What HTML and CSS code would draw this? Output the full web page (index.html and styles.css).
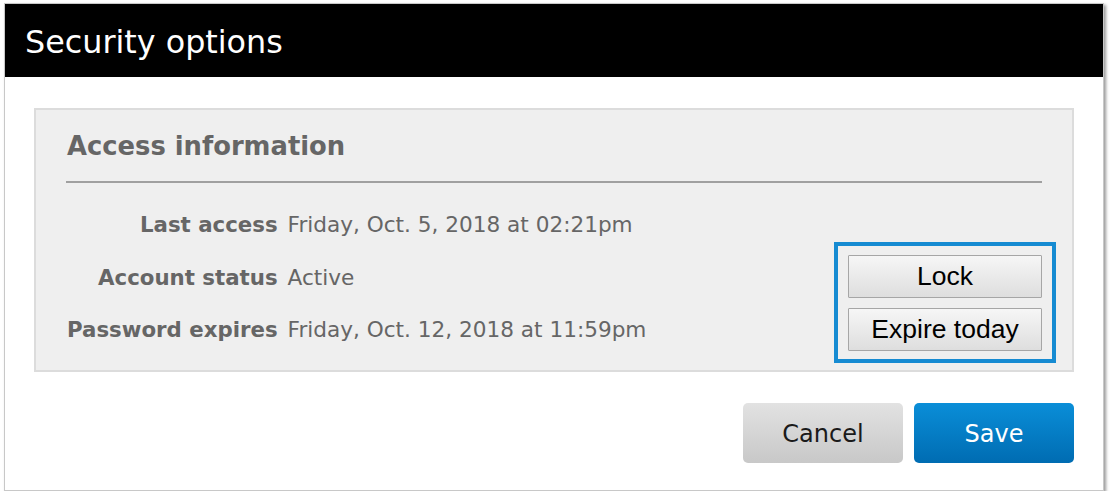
FILE: index.html
```html
<!DOCTYPE html>
<html>
<head>
<meta charset="utf-8">
<link rel="stylesheet" href="styles.css">
</head>
<body>
<div class="dialog">
  <div class="header">Security options</div>
  <div class="body">
    <div class="panel">
      <div class="panel-title">Access information</div>
      <div class="rule"></div>
      <div class="content">
        <div class="rows">
          <div class="label">Last access</div><div class="value">Friday, Oct. 5, 2018 at 02:21pm</div>
          <div class="label">Account status</div><div class="value">Active</div>
          <div class="label">Password expires</div><div class="value">Friday, Oct. 12, 2018 at 11:59pm</div>
        </div>
        <div class="actions">
          <button class="btn-small">Lock</button>
          <button class="btn-small">Expire today</button>
        </div>
      </div>
    </div>
    <div class="footer">
      <button class="btn btn-cancel">Cancel</button>
      <button class="btn btn-save">Save</button>
    </div>
  </div>
</div>
</body>
</html>
```
FILE: styles.css
```css
html, body {
  margin: 0;
  padding: 0;
  background: #fff;
}
body {
  font-family: "DejaVu Sans", sans-serif;
}
.dialog {
  margin: 3px 0 0 4px;
  width: 1098px;
  height: 486px;
  border: 1px solid #c8c8c8;
  box-shadow: 2px 2px 3px rgba(0, 0, 0, 0.4);
  background: #fff;
  display: flex;
  flex-direction: column;
}
.header {
  background: #000;
  color: #fff;
  height: 73px;
  padding-left: 20px;
  font-size: 31.8px;
  line-height: 76px;
}
.body {
  padding: 31px 29px 0 29px;
}
.panel {
  border: 2px solid #dcdcdc;
  background: #efefef;
  height: 260px;
  display: flex;
  flex-direction: column;
}
.panel-title {
  color: #666;
  font-weight: bold;
  font-size: 25.8px;
  line-height: 30px;
  padding: 21px 30px 0 31px;
}
.rule {
  height: 2px;
  background: #a0a0a0;
  margin: 20px 30px 0 30px;
}
.content {
  flex: 1;
  display: flex;
  justify-content: space-between;
  align-items: flex-end;
  padding: 0 16px 7px 31px;
}
.rows {
  display: grid;
  grid-template-columns: auto auto;
  grid-auto-rows: 52.5px;
  align-items: center;
  column-gap: 10px;
  margin-bottom: 7px;
  font-size: 21.6px;
  color: #666;
}
.label {
  font-weight: bold;
  font-size: 21.3px;
  text-align: right;
}
.actions {
  border: 4px solid #168bd2;
  padding: 9px 10px 8px 10px;
  display: flex;
  flex-direction: column;
  gap: 10px;
}
.btn-small {
  width: 194px;
  height: 43px;
  margin: 0;
  border: 1px solid #a6a6a6;
  border-radius: 1px;
  background: linear-gradient(#f6f6f6, #dedede);
  font-family: "Liberation Sans", Arial, sans-serif;
  font-size: 26.5px;
  color: #000;
  padding: 0;
}
.footer {
  display: flex;
  justify-content: flex-end;
  gap: 11px;
  padding-top: 31px;
}
.btn {
  width: 160px;
  height: 60px;
  margin: 0;
  border: none;
  border-radius: 5px;
  font-family: "DejaVu Sans", sans-serif;
  font-size: 24px;
  padding: 2px 0 0 0;
}
.btn-cancel {
  background: linear-gradient(#e2e2e2, #c8c8c8);
  color: #1a1a1a;
}
.btn-save {
  background: linear-gradient(#0a8ed8, #006cb2);
  color: #fff;
}
```
